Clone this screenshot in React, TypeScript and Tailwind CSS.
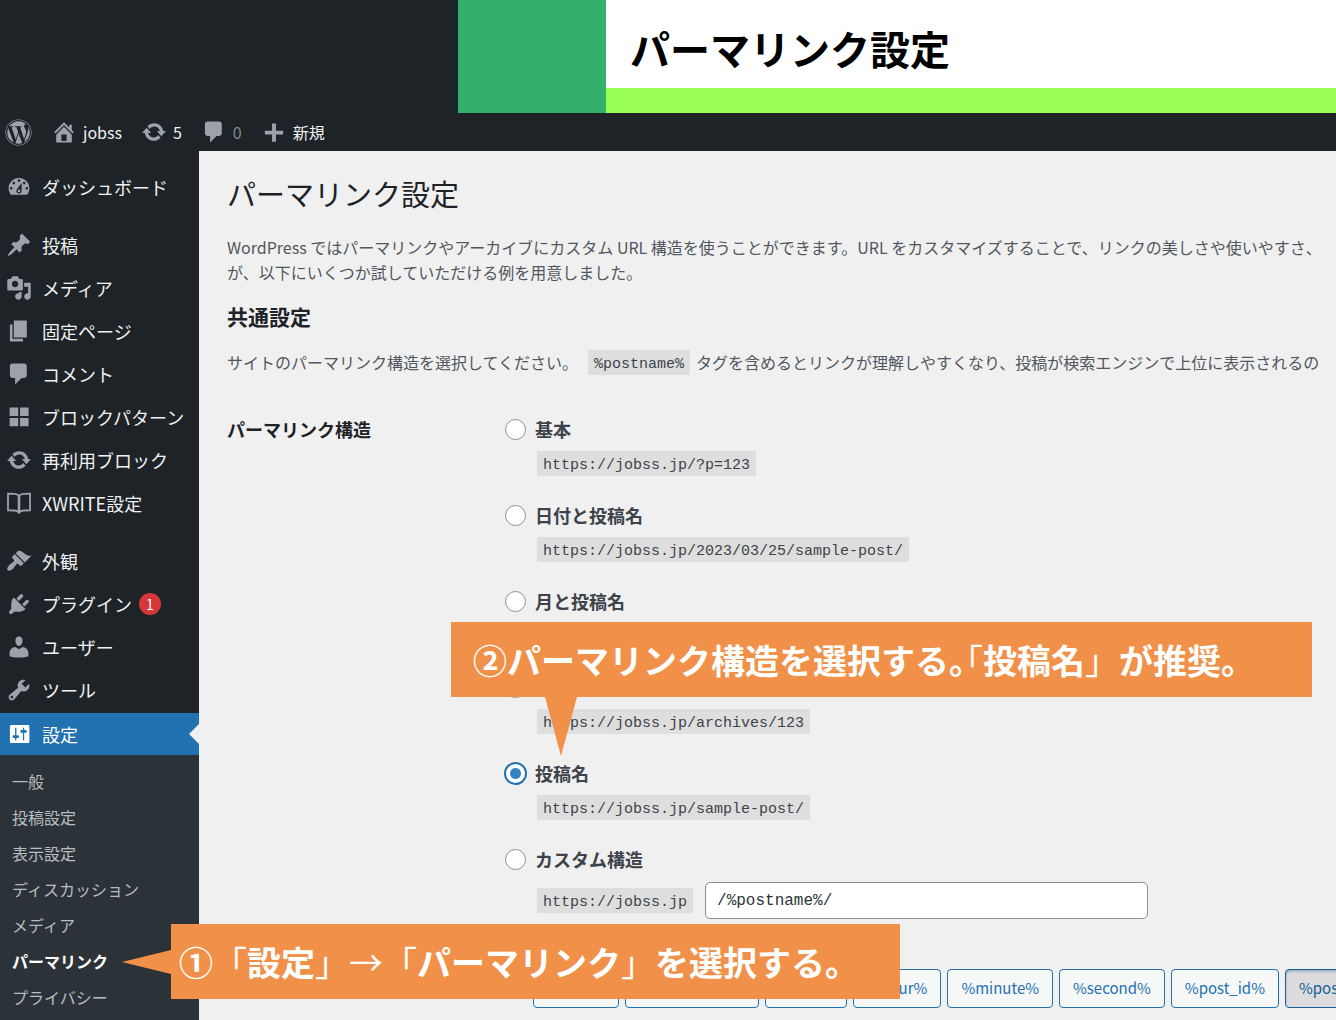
import { useState } from 'react';
import type { ReactNode } from 'react';
import { FaWordpress } from 'react-icons/fa';

const ICONS = {
  home: 'M16 8.5l1.53 1.53-1.06 1.06L10 4.6l-6.47 6.49-1.06-1.06L10 2.5l4 4v-2h2v4zm-6-2.46l6 5.99V18H4v-5.97zM12 17v-5H8v5h4z',
  update:
    'M10.2 3.28c3.53 0 6.43 2.61 6.92 6h2.08l-3.5 4-3.5-4h2.32c-.45-1.97-2.21-3.45-4.32-3.45-1.45 0-2.73.71-3.54 1.78L4.95 5.66C6.23 4.2 8.11 3.28 10.2 3.28zm-.4 13.44c-3.52 0-6.43-2.61-6.92-6H.8l3.5-4c1.17 1.33 2.33 2.67 3.5 4H5.48c.45 1.97 2.21 3.45 4.32 3.45 1.45 0 2.73-.71 3.54-1.78l1.71 1.95c-1.28 1.46-3.15 2.38-5.25 2.38z',
  comment: 'M5 2h9c1.1 0 2 .9 2 2v7c0 1.1-.9 2-2 2h-2l-5 5v-5H5c-1.1 0-2-.9-2-2V4c0-1.1.9-2 2-2z',
  plus: 'M17 9v3h-5.500v5.500h-3V12H3V9h5.500V3.500h3V9z',
  dashboard:
    'M3.76 16h12.48c1.1-1.37 1.76-3.11 1.76-5 0-4.42-3.58-8-8-8s-8 3.58-8 8c0 1.89.66 3.63 1.76 5zM10 4c.55 0 1 .45 1 1s-.45 1-1 1-1-.45-1-1 .45-1 1-1zM6 6c.55 0 1 .45 1 1s-.45 1-1 1-1-.45-1-1 .45-1 1-1zm8 0c.55 0 1 .45 1 1s-.45 1-1 1-1-.45-1-1 .45-1 1-1zm-5.37 5.55L12 7v6c0 1.1-.9 2-2 2s-2-.9-2-2c0-.57.24-1.08.63-1.45zM4 10c.55 0 1 .45 1 1s-.45 1-1 1-1-.45-1-1 .45-1 1-1zm12 0c.55 0 1 .45 1 1s-.45 1-1 1-1-.45-1-1 .45-1 1-1zm-5 3c0-.55-.45-1-1-1s-1 .45-1 1 .45 1 1 1 1-.45 1-1z',
  post: 'M10.44 3.02l1.82-1.82 6.36 6.35-1.83 1.82c-1.05-.68-2.48-.57-3.41.36l-.75.75c-.92.93-1.04 2.35-.35 3.41l-1.83 1.82-2.41-2.41-2.8 2.79c-.42.42-3.38 2.71-3.8 2.29s1.86-3.39 2.28-3.81l2.79-2.79L4.1 9.36l1.83-1.82c1.05.69 2.48.57 3.4-.36l.75-.75c.93-.92 1.05-2.35.36-3.41z',
  media:
    'M13 11V4c0-.55-.45-1-1-1h-1.67L9 1H5L3.67 3H2c-.55 0-1 .45-1 1v7c0 .55.45 1 1 1h10c.55 0 1-.45 1-1zM7 4.5c1.38 0 2.5 1.12 2.5 2.5S8.38 9.5 7 9.5 4.5 8.38 4.5 7 5.62 4.5 7 4.5zM14 6h5v10.5c0 1.38-1.12 2.5-2.5 2.5S14 17.88 14 16.5s1.12-2.5 2.5-2.5c.17 0 .34.02.5.05V9h-3V6zm-4 8.05V13h2v3.5c0 1.38-1.12 2.5-2.5 2.5S7 17.88 7 16.5 8.12 14 9.500 14c.17 0 .34.02.5.05z',
  page: 'M6 15V2h10v13H6zm-1 1h8v2H3V5h2v11z',
  grid: 'M2.800 2.700h6.600v6.500H2.800zM10.800 2.700h6.600v6.500h-6.600zM2.800 10.700h6.600v6.500H2.800zM10.800 10.700h6.600v6.500h-6.600z',
  appearance:
    'M14.48 11.06L7.41 3.99l1.5-1.5c.5-.56 2.3-.47 3.51.32 1.21.8 1.43 1.28 2.91 2.1 1.18.64 2.45 1.26 4.45.85zm-.71.71L6.7 4.7 4.93 6.47c-.39.39-.39 1.02 0 1.41l1.06 1.06c.39.39.39 1.03 0 1.42-.6.6-1.43 1.11-2.21 1.69-.35.26-.7.53-1.01.84C1.43 14.23.4 16.08 1.4 17.07c.99 1 2.84-.03 4.18-1.36.31-.31.58-.66.85-1.02.57-.78 1.08-1.61 1.69-2.21.39-.39 1.02-.39 1.41 0l1.06 1.06c.39.39 1.02.39 1.41 0z',
  plugins:
    'M13.11 4.36L9.87 7.6 8 5.73l3.24-3.24c.35-.34 1.05-.2 1.56.32.52.51.66 1.21.31 1.55zm-8 1.77l.91-1.12 9.01 9.01-1.19.84c-.71.71-2.63 1.16-3.82 1.16H6.14L4.9 17.26c-.59.59-1.54.59-2.12 0-.59-.58-.59-1.53 0-2.12l1.24-1.24v-3.88c0-1.13.4-3.19 1.09-3.89zm7.26 3.97l3.24-3.24c.34-.35 1.04-.21 1.55.31.52.51.66 1.21.31 1.55l-3.24 3.25z',
  users:
    'M10 9.25c-2.27 0-2.73-3.44-2.73-3.44C7 4.02 7.82 2 9.97 2c2.16 0 2.98 2.02 2.71 3.81 0 0-.41 3.44-2.68 3.44zm0 2.57L12.72 10c2.39 0 4.52 2.33 4.52 4.53v2.49s-3.65 1.13-7.24 1.13c-3.65 0-7.24-1.13-7.24-1.13v-2.49c0-2.25 1.94-4.48 4.47-4.48z',
  tools:
    'M16.68 9.77c-1.34 1.34-3.3 1.67-4.95.99l-5.41 6.52c-.99.99-2.59.99-3.58 0s-.99-2.59 0-3.57l6.52-5.42c-.68-1.65-.35-3.61.99-4.95 1.28-1.28 3.12-1.62 4.72-1.06l-2.89 2.89 2.82 2.82 2.86-2.87c.53 1.58.18 3.39-1.08 4.65zM3.81 16.21c.4.39 1.04.39 1.43 0 .4-.4.4-1.04 0-1.43-.39-.4-1.03-.4-1.43 0-.39.39-.39 1.03 0 1.43z',
  settings:
    'M18 16V4c0-.55-.45-1-1-1H4c-.55 0-1 .45-1 1v12c0 .55.45 1 1 1h13c.55 0 1-.45 1-1zM8 11h1c.55 0 1 .45 1 1s-.45 1-1 1H8v1.5c0 .28-.22.5-.5.5s-.5-.22-.5-.5V13H6c-.55 0-1-.45-1-1s.45-1 1-1h1V5.5c0-.28.22-.5.5-.5s.5.22.5.5V11zm5-2h-1c-.55 0-1-.45-1-1s.45-1 1-1h1V5.5c0-.28.22-.5.5-.5s.5.22.5.5V7h1c.55 0 1 .45 1 1s-.45 1-1 1h-1v5.5c0 .28-.22.5-.5.5s-.5-.22-.5-.5V9z',
};

type IconName = keyof typeof ICONS | 'book';

function Icon({ name }: { name: IconName }) {
  if (name === 'book') {
    return (
      <svg viewBox="0 0 26 26" className="size-[26px] shrink-0" fill="none" stroke="currentColor" strokeWidth="1.8" aria-hidden="true">
        <path d="M2 3.700l6.500.2c2.200.1 3.800.9 4.500 2.200.7-1.300 2.300-2.100 4.500-2.200l6.500-.2v16.600l-6.500.2c-2.200.1-3.800.9-4.500 2.200-.7-1.300-2.300-2.100-4.500-2.200l-6.500-.2z" />
        <path d="M13 6v16.500" strokeWidth="2.600" />
      </svg>
    );
  }
  return (
    <svg viewBox="0 0 20 20" className="size-[26px] shrink-0" fill="currentColor" fillRule="evenodd" aria-hidden="true">
      <path d={ICONS[name]} />
    </svg>
  );
}

const MENU: { icon: IconName; label: string; badge?: string }[][] = [
  [{ icon: 'dashboard', label: 'ダッシュボード' }],
  [
    { icon: 'post', label: '投稿' },
    { icon: 'media', label: 'メディア' },
    { icon: 'page', label: '固定ページ' },
    { icon: 'comment', label: 'コメント' },
    { icon: 'grid', label: 'ブロックパターン' },
    { icon: 'update', label: '再利用ブロック' },
    { icon: 'book', label: 'XWRITE設定' },
  ],
  [
    { icon: 'appearance', label: '外観' },
    { icon: 'plugins', label: 'プラグイン', badge: '1' },
    { icon: 'users', label: 'ユーザー' },
    { icon: 'tools', label: 'ツール' },
  ],
];

const SUBMENU = ['一般', '投稿設定', '表示設定', 'ディスカッション', 'メディア', 'パーマリンク', 'プライバシー'];

const STRUCTURES = [
  { label: '基本', url: 'https://jobss.jp/?p=123' },
  { label: '日付と投稿名', url: 'https://jobss.jp/2023/03/25/sample-post/' },
  { label: '月と投稿名', url: 'https://jobss.jp/2023/03/sample-post/' },
  { label: '数字ベース', url: 'https://jobss.jp/archives/123' },
  { label: '投稿名', url: 'https://jobss.jp/sample-post/' },
];

const TAGS = ['%year%', '%monthnum%', '%day%', '%hour%', '%minute%', '%second%', '%post_id%', '%postname%'];

function Code({ children }: { children: ReactNode }) {
  return (
    <code className="inline-block h-[25px] bg-[#dedede] px-[6px] font-['Liberation_Mono','Noto_Sans_CJK_JP',monospace] text-[15px] leading-[30px] whitespace-nowrap text-[#3c434a]">
      {children}
    </code>
  );
}

function Banner() {
  return (
    <header className="flex h-[113px] shrink-0">
      <div className="w-[458px] shrink-0" />
      <div className="w-[148px] shrink-0 bg-[#33b16c]" />
      <div className="flex flex-1 flex-col bg-white">
        <h1 className="flex flex-1 items-center pt-2 pl-6 text-[40px] leading-[60px] font-bold text-black">パーマリンク設定</h1>
        <div className="h-[25px] bg-[#99ff55]" />
      </div>
    </header>
  );
}

function AdminBar() {
  const link = 'flex items-center gap-[6px] text-[#9ca2a7]';
  return (
    <nav aria-label="ツールバー" className="flex h-[38px] shrink-0 items-center gap-[19px] pl-[5px] text-base leading-6">
      <a href="#about" aria-label="WordPress" className="text-[#9ca2a7]">
        <FaWordpress size={27} />
      </a>
      <a href="#site" className={link}>
        <Icon name="home" />
        <span className="text-[#f0f0f1]">jobss</span>
      </a>
      <a href="#updates" className={link}>
        <Icon name="update" />
        <span className="text-[#f0f0f1]">5</span>
      </a>
      <a href="#comments" className={link}>
        <Icon name="comment" />
        <span className="text-[#82878c]">0</span>
      </a>
      <a href="#new" className={link}>
        <Icon name="plus" />
        <span className="text-[#f0f0f1]">新規</span>
      </a>
    </nav>
  );
}

function Sidebar() {
  return (
    <nav aria-label="メインメニュー" className="flex w-[199px] shrink-0 flex-col pt-[14px] text-lg leading-[26px] text-[#f0f0f1]">
      <div className="flex flex-col gap-[15px] pb-[2px]">
        {MENU.map((group) => (
          <ul key={group[0].label}>
            {group.map((item) => (
              <li key={item.label}>
                <a href="#menu" className="flex h-[43px] items-center gap-[10px] pl-[6px] whitespace-nowrap">
                  <span className="text-[#9ca2a7]">
                    <Icon name={item.icon} />
                  </span>
                  <span>{item.label}</span>
                  {item.badge && (
                    <span className="-ml-[3px] flex size-[22px] items-center justify-center rounded-full bg-[#d63638] text-sm text-white">
                      {item.badge}
                    </span>
                  )}
                </a>
              </li>
            ))}
          </ul>
        ))}
      </div>
      <a href="#settings" className="relative flex h-[42px] shrink-0 items-center gap-[10px] bg-[#2271b1] pl-[6px] text-white">
        <Icon name="settings" />
        設定
        <span className="absolute top-[11px] right-0 border-y-[10px] border-r-[10px] border-y-transparent border-r-[#f0f0f1]" />
      </a>
      <ul className="flex-1 bg-[#2c3338] pt-[8px] text-base">
        {SUBMENU.map((label) => (
          <li key={label}>
            <a
              href="#submenu"
              className={
                label === 'パーマリンク'
                  ? 'flex h-9 items-center pl-3 font-bold text-white'
                  : 'flex h-9 items-center pl-3 text-[#b9bdc1]'
              }
            >
              {label}
            </a>
          </li>
        ))}
      </ul>
    </nav>
  );
}

function RadioLabel({ label, checked, onSelect }: { label: string; checked: boolean; onSelect: () => void }) {
  return (
    <label className="flex h-[26px] items-center text-lg leading-[26px] font-bold text-[#3c434a]">
      <span className="mr-2 flex w-6 justify-center">
        <input
          type="radio"
          name="structure"
          checked={checked}
          onChange={onSelect}
          className="size-[21px] appearance-none rounded-full border border-[#8c8f94] bg-white checked:size-[23px] checked:border-2 checked:border-[#2271b1] checked:bg-[radial-gradient(circle,#3582c4_5px,white_6px)]"
        />
      </span>
      {label}
    </label>
  );
}

function Main() {
  const [selected, setSelected] = useState('投稿名');
  const [custom, setCustom] = useState('/%postname%/');
  return (
    <main className="min-w-0 flex-1 overflow-hidden bg-[#f0f0f1] pl-7 text-base text-[#50575e]">
      <h2 className="pt-[21px] text-[29px] leading-[42px] text-[#1d2327]">パーマリンク設定</h2>
      <p className="mt-[21px] leading-[25px] whitespace-nowrap">
        WordPress ではパーマリンクやアーカイブにカスタム URL 構造を使うことができます。URL をカスタマイズすることで、リンクの美しさや使いやすさ、
        <br />
        が、以下にいくつか試していただける例を用意しました。
      </p>
      <h3 className="mt-[16px] text-[21px] leading-[30px] font-bold text-[#1d2327]">共通設定</h3>
      <p className="mt-[18px] flex items-center gap-[6px] leading-[27px] whitespace-nowrap">
        サイトのパーマリンク構造を選択してください。
        <span className="ml-1 flex">
          <Code>%postname%</Code>
        </span>
        タグを含めるとリンクが理解しやすくなり、投稿が検索エンジンで上位に表示されるの
      </p>
      <fieldset className="mt-10 flex">
        <div className="w-[276px] shrink-0 text-lg leading-[26px] font-bold text-[#1d2327]">パーマリンク構造</div>
        <div className="min-w-0 flex-1">
          {STRUCTURES.map((s) => (
            <div key={s.label} className="flex h-[86px] flex-col">
              <RadioLabel label={s.label} checked={selected === s.label} onSelect={() => setSelected(s.label)} />
              <div className="mt-[9px] flex pl-[34px]">
                <Code>{s.url}</Code>
              </div>
            </div>
          ))}
          <RadioLabel label="カスタム構造" checked={selected === 'custom'} onSelect={() => setSelected('custom')} />
          <div className="mt-[10px] flex items-center gap-3 pl-[34px]">
            <Code>https://jobss.jp</Code>
            <input
              type="text"
              aria-label="カスタム構造"
              value={custom}
              onChange={(e) => setCustom(e.target.value)}
              className="h-[37px] w-[443px] rounded-[5px] border border-[#8c8f94] bg-white px-[11px] font-['Liberation_Mono',monospace] text-base text-[#2c3338]"
            />
          </div>
          <div className="mt-[50px] flex gap-[6px] pl-[30px]">
            {TAGS.map((tag) => (
              <button
                key={tag}
                type="button"
                className={
                  tag === '%postname%'
                    ? 'h-[39px] shrink-0 rounded-[4px] border border-[#135e96] bg-[#dcdcde] px-[13px] text-[15px] text-[#135e96] shadow-[inset_0_2px_5px_-3px_#0a4b78]'
                    : 'h-[39px] shrink-0 rounded-[4px] border border-[#2271b1] bg-[#f6f7f7] px-[13px] text-[15px] text-[#2271b1]'
                }
              >
                {tag}
              </button>
            ))}
          </div>
        </div>
      </fieldset>
    </main>
  );
}

function Callouts() {
  const box = 'absolute flex h-[75px] items-center bg-[#f19149] text-[34px] leading-[50px] font-bold whitespace-nowrap text-white';
  return (
    <>
      <div className={`${box} top-[622px] left-[451px] w-[861px] pl-[22px]`}>
        <p>
          ②パーマリンク構造を選択する<span className="[font-feature-settings:'halt']">。<span className="font-normal">「</span></span>
          投稿名<span className="font-normal">」</span>が推奨。
        </p>
        <svg viewBox="0 0 32 59" className="absolute top-full left-[94px] h-[59px] w-8" aria-hidden="true">
          <path d="M0 0h32L16 59z" fill="#f19149" />
        </svg>
      </div>
      <div className={`${box} top-[924px] left-[171px] w-[729px] pl-2`}>
        <p>
          ①<span className="font-normal">「</span>設定<span className="font-normal">」→「</span>パーマリンク
          <span className="font-normal">」</span>を選択する。
        </p>
        <svg viewBox="0 0 49 24" className="absolute top-[26px] right-full h-6 w-[49px]" aria-hidden="true">
          <path d="M49 0v24L0 12z" fill="#f19149" />
        </svg>
      </div>
    </>
  );
}

export default function App() {
  return (
    <div
      lang="ja"
      className="relative flex h-screen flex-col overflow-hidden bg-[#1d2327] font-['Noto_Sans_CJK_JP',sans-serif]"
    >
      <Banner />
      <AdminBar />
      <div className="flex min-h-0 flex-1">
        <Sidebar />
        <Main />
      </div>
      <Callouts />
    </div>
  );
}
